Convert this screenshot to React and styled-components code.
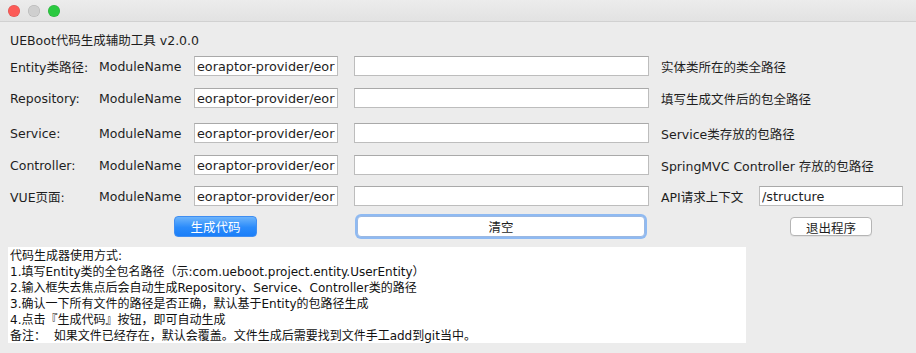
import styled, { createGlobalStyle } from "styled-components";

const GlobalStyle = createGlobalStyle`
  html, body {
    margin: 0;
    padding: 0;
    background: #ececec;
  }
  body {
    font-family: "DejaVu Sans", "Noto Sans CJK SC", sans-serif;
    color: #1e1e1e;
  }
`;

const Window = styled.div`
  width: 916px;
  height: 353px;
  background: #ececec;
  overflow: hidden;
  display: flex;
  flex-direction: column;
`;

const TitleBar = styled.div`
  height: 21px;
  flex: none;
  display: flex;
  align-items: center;
  gap: 8px;
  padding-left: 8px;
  background: linear-gradient(#ececec, #e2e2e2);
  border-bottom: 1px solid #d1d1d1;
`;

const Light = styled.span`
  width: 12px;
  height: 12px;
  border-radius: 50%;
  background: ${({ color }) => color};
  box-shadow: inset 0 0 0 0.5px rgba(0, 0, 0, 0.15);
`;

const Content = styled.div`
  display: flex;
  flex-direction: column;
  padding: 9px 0 0 8px;
`;

const Heading = styled.div`
  height: 20px;
  line-height: 20px;
  padding-left: 2px;
  font-size: 12.5px;
`;

const Row = styled.div`
  display: flex;
  align-items: center;
  height: 20px;
  margin-top: ${({ top }) => top}px;
  font-size: 12.5px;
`;

const Label = styled.div`
  width: 89px;
  padding-left: 2px;
  white-space: nowrap;
`;

const Module = styled.div`
  width: 95px;
  white-space: nowrap;
`;

const Field = styled.input`
  box-sizing: border-box;
  width: ${({ w }) => w}px;
  height: 20px;
  margin-right: ${({ mr }) => mr || 0}px;
  padding: 0 2px;
  border: 1px solid #bdbdbd;
  border-top-color: #a9a9a9;
  background: #fff;
  font: inherit;
  font-size: 12.8px;
  color: #1e1e1e;
  outline: none;
`;

const Hint = styled.div`
  white-space: nowrap;
  width: ${({ w }) => (w ? `${w}px` : "auto")};
`;

const ButtonRow = styled.div`
  display: flex;
  align-items: center;
  height: 21px;
  margin-top: 10px;
`;

const Button = styled.button`
  box-sizing: border-box;
  width: ${({ w }) => w}px;
  height: ${({ h }) => h || 21}px;
  margin-left: ${({ ml }) => ml}px;
  padding: 0;
  border-radius: 4px;
  font-family: "DejaVu Sans", "Noto Sans CJK SC", sans-serif;
  font-size: 12.5px;
  cursor: pointer;
  ${({ variant }) =>
    variant === "primary"
      ? `
    color: #fff;
    border: 1px solid #3f8ef2;
    background: linear-gradient(#6db4fb, #2a8bfb 55%, #1b7ef8);
  `
      : variant === "focus"
      ? `
    color: #1e1e1e;
    background: #fff;
    border: 1px solid #9ab8e3;
    box-shadow: 0 0 0 2px #8fbaf2;
  `
      : `
    color: #1e1e1e;
    background: #fff;
    border: 1px solid #b5b5b5;
    box-shadow: 0 1px 0 rgba(0, 0, 0, 0.05);
  `}
`;

const Notes = styled.div`
  box-sizing: border-box;
  width: 738px;
  height: 96px;
  margin-top: 10px;
  padding: 1px 2px;
  background: #fff;
  font-size: 12px;
  line-height: 16px;
  white-space: pre;
  color: #111;
`;

const rows = [
  { label: "Entity类路径:", hint: "实体类所在的类全路径", top: 5 },
  { label: "Repository:", hint: "填写生成文件后的包全路径", top: 12 },
  { label: "Service:", hint: "Service类存放的包路径", top: 15 },
  { label: "Controller:", hint: "SpringMVC Controller 存放的包路径", top: 12 },
];

const notes = [
  "代码生成器使用方式:",
  "1.填写Entity类的全包名路径（示:com.ueboot.project.entity.UserEntity）",
  "2.输入框失去焦点后会自动生成Repository、Service、Controller类的路径",
  "3.确认一下所有文件的路径是否正确，默认基于Entity的包路径生成",
  "4.点击『生成代码』按钮，即可自动生成",
  "备注：  如果文件已经存在，默认会覆盖。文件生成后需要找到文件手工add到git当中。",
];

export default function App() {
  return (
    <Window>
      <GlobalStyle />
      <TitleBar>
        <Light color="#fc5b57" />
        <Light color="#cfcfcf" />
        <Light color="#2ac940" />
      </TitleBar>
      <Content>
        <Heading>UEBoot代码生成辅助工具 v2.0.0</Heading>
        {rows.map((r) => (
          <Row key={r.label} top={r.top}>
            <Label>{r.label}</Label>
            <Module>ModuleName</Module>
            <Field w={144} mr={16} defaultValue="eoraptor-provider/eoraptor-provider" />
            <Field w={295} mr={12} defaultValue="" />
            <Hint>{r.hint}</Hint>
          </Row>
        ))}
        <Row top={11}>
          <Label>VUE页面:</Label>
          <Module>ModuleName</Module>
          <Field w={144} mr={16} defaultValue="eoraptor-provider/eoraptor-provider" />
          <Field w={295} mr={12} defaultValue="" />
          <Hint w={98}>API请求上下文</Hint>
          <Field w={144} defaultValue="/structure" />
        </Row>
        <ButtonRow>
          <Button variant="primary" w={83} ml={166}>
            生成代码
          </Button>
          <Button variant="focus" w={288} ml={100}>
            清空
          </Button>
          <Button w={82} h={19} ml={145}>
            退出程序
          </Button>
        </ButtonRow>
        <Notes>{notes.join("\n")}</Notes>
      </Content>
    </Window>
  );
}
